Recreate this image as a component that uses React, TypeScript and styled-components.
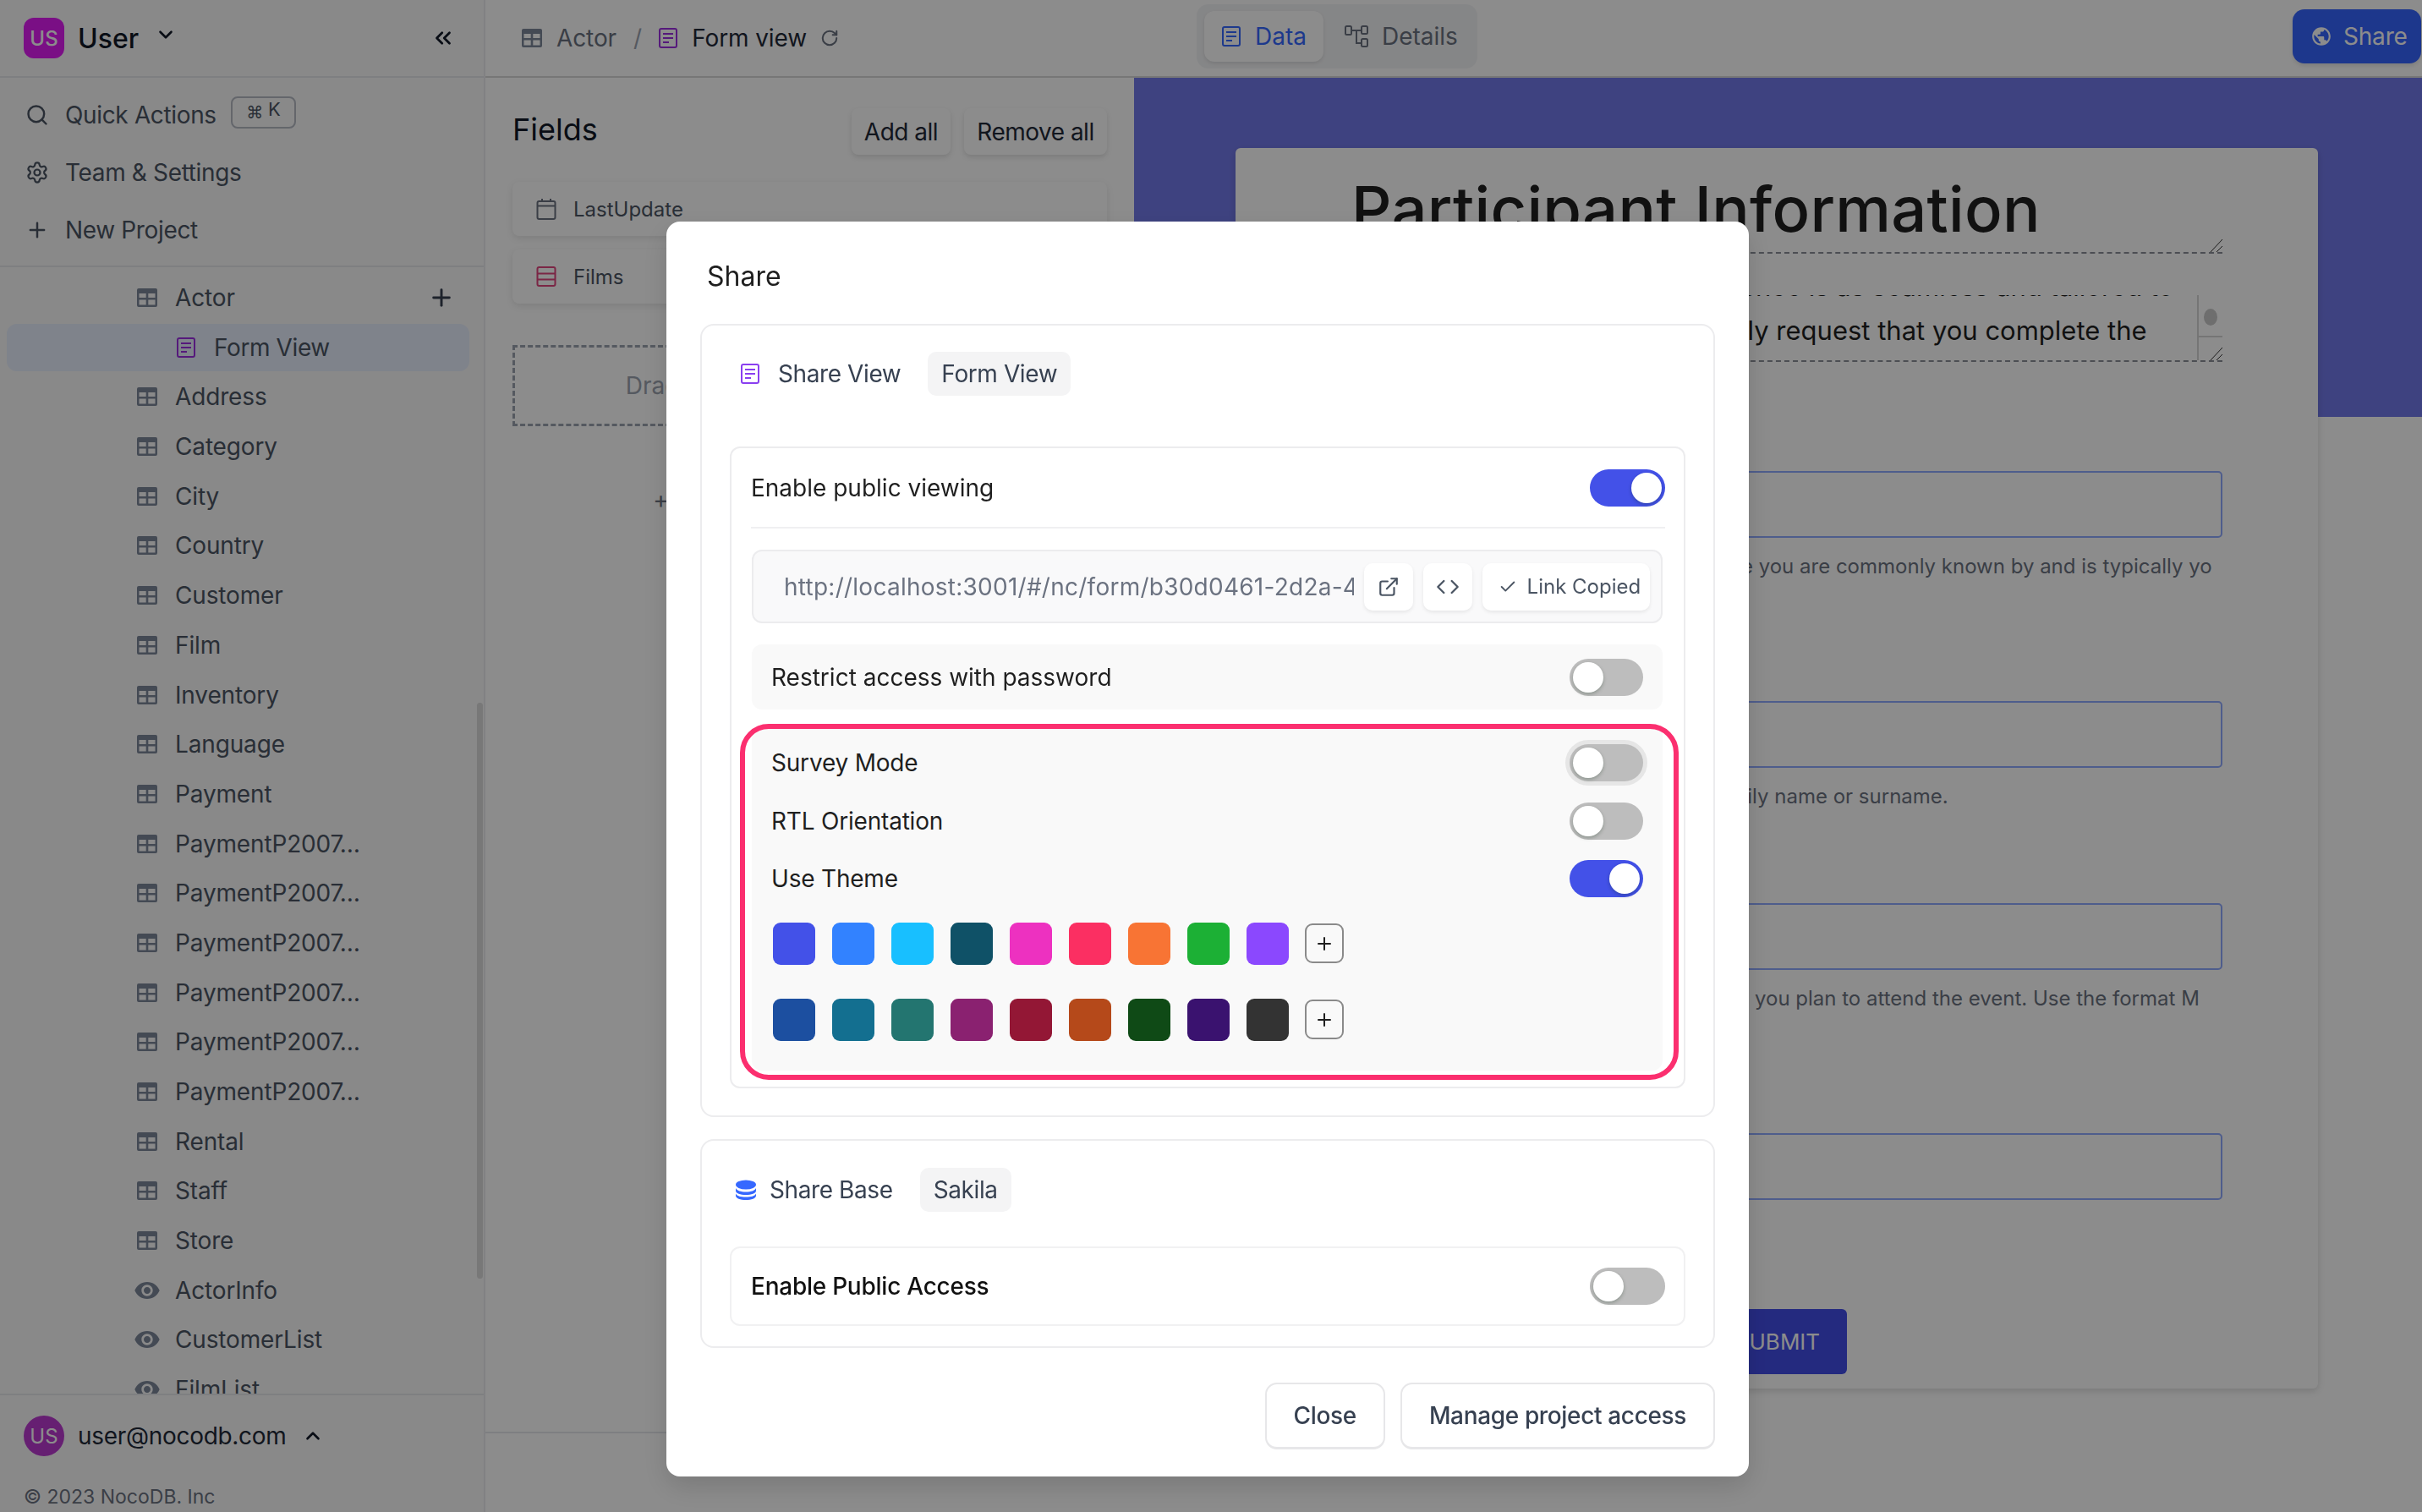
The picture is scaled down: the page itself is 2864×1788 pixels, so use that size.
import styled, {createGlobalStyle} from 'styled-components';
import {Check, ChevronDown, ChevronUp, ChevronsLeft, Code, ExternalLink, Plus, RotateCw, Search, Settings} from 'lucide-react';
import {MdPublic, MdVisibility} from 'react-icons/md';

const GlobalStyle = createGlobalStyle`
  html, body {
    margin: 0;
    padding: 0;
    height: 100%;
    background: #fff;
    overflow: hidden;
  }

  * {
    box-sizing: border-box;
  }

  body {
    font-family: Inter, "Noto Sans", "Liberation Sans", sans-serif;
    font-size: 28px;
    color: #1f2937;
  }
`;

const Page = styled.div`
  display: flex;
  width: 2864px;
  height: 1788px;
  overflow: hidden;
`;

/* ---------- sidebar ---------- */

const Sidebar = styled.aside`
  width: 574px;
  flex: none;
  height: 100%;
  display: flex;
  flex-direction: column;
  background: #f9f9fa;
  border-right: 2px solid #ececee;
`;

const SidebarHeader = styled.div`
  height: 92px;
  flex: none;
  display: flex;
  align-items: center;
  padding: 0 33px 0 28px;
  border-bottom: 2px solid #e5e7eb;
`;

const ProjectBadge = styled.div`
  width: 48px;
  height: 48px;
  border-radius: 12px;
  background: #de1cf2;
  color: #fff;
  display: flex;
  align-items: center;
  justify-content: center;
  font-size: 24px;
  font-weight: 500;
`;

const ProjectName = styled.span`
  margin-left: 16px;
  font-size: 32px;
  font-weight: 500;
  color: #111827;
`;

const ProjectCaret = styled.span`
  display: flex;
  margin-left: 19px;
  margin-top: -8px;
  color: #111827;
`;

const Collapse = styled.span`
  display: flex;
  margin-left: auto;
  color: #111827;
`;

const Menu = styled.div`
  flex: none;
  height: 224px;
  padding: 10px 0;
  border-bottom: 2px solid #e5e7eb;
`;

const MenuRow = styled.div`
  height: 68px;
  display: flex;
  align-items: center;
  gap: 19px;
  padding-left: 30px;
  color: #4b5563;
  font-size: 28px;
  letter-spacing: -0.35px;
`;

const Kbd = styled.span`
  width: 77px;
  height: 38px;
  margin-left: -2px;
  margin-top: -6px;
  border: 2px solid #b6bbc4;
  border-radius: 8px;
  display: flex;
  align-items: center;
  justify-content: center;
  gap: 6px;
  font-size: 20px;
  font-family: "DejaVu Sans", sans-serif;
  color: #4b5563;
`;

const KbdKey = styled.span`
  font-family: Inter, sans-serif;
  font-size: 22px;
  margin-top: -8px;
`;

const Tree = styled.div`
  position: relative;
  flex: 1;
  min-height: 0;
  overflow: hidden;
  padding-top: 8px;
  display: flex;
  flex-direction: column;
  gap: 2.7px;
`;

const TreeRow = styled.div<{$active?: boolean; $nested?: boolean}>`
  height: 56px;
  flex: none;
  margin: 0 17px 0 8px;
  padding: 0 17px 0 ${(p) => (p.$nested ? '200px' : '154px')};
  display: flex;
  align-items: center;
  gap: 21px;
  border-radius: 12px;
  background: ${(p) => (p.$active ? '#e7effe' : 'transparent')};
  color: #4b5563;
  font-size: 28px;
  letter-spacing: ${(p) => (p.$active ? '-0.4px' : '-0.15px')};
`;

const TreeLabel = styled.span`
  max-width: 222px;
  overflow: hidden;
  white-space: nowrap;
  text-overflow: ellipsis;
`;

const TreeAdd = styled.span`
  display: flex;
  margin-left: auto;
  color: #374151;
`;

const Scrollbar = styled.div`
  position: absolute;
  top: 515px;
  right: 1px;
  width: 7px;
  height: 681px;
  border-radius: 4px;
  background: #dadada;
`;

const SidebarFooter = styled.div`
  flex: none;
  height: 140px;
  padding: 24px 28px 0;
  border-top: 2px solid #e5e7eb;
`;

const UserRow = styled.div`
  display: flex;
  align-items: center;
  height: 48px;
`;

const Avatar = styled.div`
  width: 48px;
  height: 48px;
  border-radius: 50%;
  background: #bb3ad0;
  color: #fff;
  display: flex;
  align-items: center;
  justify-content: center;
  font-size: 24px;
`;

const UserMail = styled.span`
  margin-left: 16px;
  font-size: 28px;
  color: #1f2937;
  letter-spacing: -0.3px;
`;

const UserCaret = styled.span`
  display: flex;
  margin-left: 18px;
  color: #111827;
`;

const Copyright = styled.div`
  margin-top: 32px;
  font-size: 23px;
  line-height: 32px;
  color: #6b7280;
`;

/* ---------- main ---------- */

const Main = styled.div`
  flex: 1;
  min-width: 0;
  display: flex;
  flex-direction: column;
`;

const TopBar = styled.header`
  height: 92px;
  flex: none;
  display: flex;
  align-items: center;
  padding-left: 43px;
  border-bottom: 2px solid #d9d9d9;
`;

const Crumbs = styled.div`
  width: 798px;
  display: flex;
  align-items: center;
  font-size: 28px;
  color: #6b7280;
`;

const CrumbText = styled.span<{$strong?: boolean}>`
  margin-left: ${(p) => (p.$strong ? '16px' : '17px')};
  color: ${(p) => (p.$strong ? '#1f2937' : '#6b7280')};
  letter-spacing: -0.1px;
`;

const CrumbSlash = styled.span`
  margin: 0 19px 0 20px;
  color: #9ca3af;
`;

const Refresh = styled.span`
  display: flex;
  margin-left: 16px;
  color: #6b7280;
`;

const TabGroup = styled.div`
  width: 332px;
  height: 76px;
  margin-top: -4px;
  padding: 8px 9px;
  display: flex;
  gap: 25px;
  border-radius: 14px;
  background: #f3f4f6;
`;

const Tab = styled.div<{$active?: boolean}>`
  height: 60px;
  padding: 0 ${(p) => (p.$active ? '20px' : '0')};
  display: flex;
  align-items: center;
  gap: 16px;
  border-radius: 12px;
  font-size: 28px;
  background: ${(p) => (p.$active ? '#fff' : 'transparent')};
  color: ${(p) => (p.$active ? '#3668ff' : '#6b7280')};
  box-shadow: ${(p) => (p.$active ? '0 2px 4px rgba(0,0,0,.1)' : 'none')};
`;

const ShareButton = styled.button`
  margin-left: auto;
  margin-right: 1px;
  margin-top: -4px;
  width: 152px;
  height: 64px;
  padding: 0 0 0 21px;
  border: 0;
  border-radius: 14px;
  display: flex;
  align-items: center;
  gap: 13px;
  background: #3665ff;
  color: #fff;
  font: inherit;
  font-size: 28px;
  letter-spacing: -0.2px;
  box-shadow: 0 3px 4px rgba(0,0,0,.1);
`;

const Content = styled.div`
  flex: 1;
  min-height: 0;
  display: flex;
`;

const FieldsPanel = styled.section`
  width: 767px;
  height: 1603px;
  flex: none;
  padding: 36px 32px 0 32px;
  border-bottom: 2px solid #e5e7eb;
`;

const FieldsHead = styled.div`
  display: flex;
  align-items: center;
  gap: 16px;
  margin-bottom: 32px;
`;

const FieldsTitle = styled.h2`
  margin: 0 auto 5px 0;
  font-size: 36px;
  font-weight: 400;
  color: #111827;
`;

const GhostButton = styled.button<{$width: number}>`
  width: ${(p) => p.$width}px;
  height: 55px;
  padding: 0;
  border: 0;
  border-radius: 8px;
  background: #fff;
  color: #1f2937;
  font: inherit;
  font-size: 28px;
  letter-spacing: -0.5px;
  box-shadow: 0 3px 6px rgba(0,0,0,.12);
`;

const FieldCard = styled.div`
  height: 64px;
  margin-bottom: 16px;
  padding-left: 28px;
  display: flex;
  align-items: center;
  gap: 20px;
  border-radius: 8px;
  background: #fff;
  font-size: 24px;
  color: #4b5563;
  box-shadow: 0 3px 8px rgba(0,0,0,.1);
`;

const DropZone = styled.div`
  height: 96px;
  margin-top: 49px;
  display: flex;
  align-items: center;
  justify-content: center;
  border: 3px dashed #9ca3af;
  font-size: 28px;
  color: #9ca3af;
`;

const AddField = styled.div`
  margin-top: 72px;
  text-align: center;
  font-size: 28px;
  color: #6b7280;
`;

const FormArea = styled.section`
  flex: 1;
  min-width: 0;
  padding: 83px 123px 0 120px;
  background: linear-gradient(#7279e9 0, #7279e9 401px, transparent 401px);
`;

const FormCard = styled.div`
  height: 1467px;
  padding: 0 113px 0 137px;
  display: flex;
  flex-direction: column;
  border-radius: 6px;
  background: #fff;
  box-shadow: 0 3px 8px rgba(0,0,0,.14);
`;

const FormTitle = styled.div`
  position: relative;
  height: 125px;
  padding-top: 27px;
  border-bottom: 2px dashed #8b8f98;
  font-size: 74px;
  line-height: 90px;
  font-weight: 500;
  letter-spacing: 0.3px;
  color: #1f1f1f;
`;

const FormDescription = styled.div`
  position: relative;
  height: 79px;
  margin-top: 49px;
  margin-bottom: 19px;
  padding-bottom: 9px;
  display: flex;
  flex-direction: column;
  justify-content: flex-end;
  overflow: hidden;
  border-bottom: 2px dashed #8b8f98;
  font-size: 31px;
  line-height: 52px;
  color: #1f1f1f;
  white-space: nowrap;
`;

const Grip = styled.svg`
  position: absolute;
  right: 0;
  bottom: 0;
  color: #333;
`;

const TextScroll = styled.div`
  position: absolute;
  top: 0;
  right: 0;
  bottom: 0;
  width: 30px;
  border-left: 2px solid #d5d5d5;
  background: #fff;
`;

const TextThumb = styled.div`
  width: 16px;
  height: 20px;
  margin: 16px 0 0 6px;
  border-radius: 50%;
  background: #c8c8c8;
`;

const TextRule = styled.div`
  height: 2px;
  margin-top: 12px;
  background: #d5d5d5;
`;

const FieldBlock = styled.div`
  margin-top: 64px;
`;

const FieldLabel = styled.label`
  display: block;
  height: 46px;
  font-size: 28px;
  font-weight: 500;
  color: #1f2937;
`;

const FieldInput = styled.div`
  height: 79px;
  border: 2px solid #8fa9ff;
  border-radius: 5px;
`;

const FieldHelp = styled.div`
  margin-top: 17px;
  font-size: 24px;
  line-height: 33px;
  color: #6b7280;
`;

const SubmitButton = styled.button`
  align-self: flex-start;
  width: 164px;
  height: 77px;
  margin-top: 129px;
  margin-left: 422px;
  border: 0;
  border-radius: 6px;
  background: #434de8;
  color: #fff;
  font: inherit;
  font-size: 26px;
`;

/* ---------- share dialog ---------- */

const Backdrop = styled.div`
  position: fixed;
  inset: 0;
  padding: 262px 0 0 788px;
  background: rgba(0, 0, 0, .45);
`;

const Dialog = styled.div`
  width: 1280px;
  height: 1484px;
  padding: 44px 40px 0;
  border-radius: 16px;
  background: #fff;
  box-shadow: 0 12px 32px rgba(0, 0, 0, .14);
`;

const DialogTitle = styled.h3`
  margin: 0 0 35px 8px;
  font-size: 32px;
  line-height: 42px;
  font-weight: 400;
  color: #1f1f1f;
`;

const Section = styled.div<{$compact?: boolean}>`
  margin-bottom: 26px;
  padding: ${(p) => (p.$compact ? '32px 33px 24px' : '31px 33px 32px')};
  border: 2px solid #ececee;
  border-radius: 16px;
`;

const SectionHead = styled.div<{$inset: number}>`
  height: 52px;
  padding-left: ${(p) => p.$inset}px;
  display: flex;
  align-items: center;
  gap: 32px;
  font-size: 28px;
  letter-spacing: -0.4px;
  color: #374151;
`;

const SectionName = styled.span<{$gap: number}>`
  display: flex;
  align-items: center;
  gap: ${(p) => p.$gap}px;
`;

const SectionChip = styled.span`
  height: 52px;
  padding: 0 16px;
  display: flex;
  align-items: center;
  border-radius: 10px;
  background: #f4f4f5;
  color: #374151;
`;

const InnerCard = styled.div`
  margin-top: 60px;
  padding: 0 25px 19px 24px;
  border: 2px solid #ececee;
  border-radius: 12px;
`;

const PublicRow = styled.div`
  height: 95px;
  margin: 0 -3px 0 -1px;
  display: flex;
  align-items: center;
  justify-content: space-between;
  border-bottom: 2px solid #f0f0f1;
  color: #1f1f1f;
`;

const UrlBox = styled.div`
  height: 87px;
  margin-top: 25px;
  padding: 0 13px 0 36px;
  display: flex;
  align-items: center;
  gap: 12px;
  border: 2px solid #ececee;
  border-radius: 12px;
  background: #f9f9fa;
`;

const UrlText = styled.div`
  width: 677px;
  overflow: hidden;
  white-space: nowrap;
  font-size: 28px;
  letter-spacing: .25px;
  color: #6b7280;
`;

const UrlAction = styled.button<{$wide?: boolean}>`
  width: ${(p) => (p.$wide ? '199px' : '58px')};
  height: 56px;
  padding: 0 0 0 ${(p) => (p.$wide ? '8px' : '0')};
  border: 0;
  border-radius: 10px;
  display: flex;
  align-items: center;
  justify-content: center;
  gap: 12px;
  background: #fff;
  color: #4b5563;
  font: inherit;
  font-size: 24px;
  box-shadow: 0 2px 4px rgba(0, 0, 0, .08);
`;

const RestrictRow = styled.div`
  height: 77px;
  margin-top: 25px;
  padding: 0 23px;
  display: flex;
  align-items: center;
  justify-content: space-between;
  border-radius: 12px;
  background: #f9f9f9;
  color: #1f1f1f;
`;

const ThemeBlock = styled.div`
  position: relative;
  height: 408px;
  margin-top: 19px;
  padding-top: 10px;
  border-radius: 12px;
  background: #f9f9f9;
  color: #1f1f1f;
  letter-spacing: -0.2px;
`;

const Highlight = styled.div`
  position: absolute;
  top: -2px;
  left: -14px;
  right: -19px;
  bottom: -11px;
  border: 6px solid #fb2f6f;
  border-radius: 34px;
  pointer-events: none;
`;

const OptionRow = styled.div`
  height: 68.5px;
  padding: 0 23px;
  display: flex;
  align-items: center;
  justify-content: space-between;
`;

const SwatchGrid = styled.div`
  margin-top: 17px;
  padding-left: 25px;
  display: flex;
  flex-direction: column;
  gap: 40px;
`;

const SwatchRow = styled.div`
  height: 50px;
  display: flex;
  align-items: center;
  gap: 20px;
`;

const Swatch = styled.div<{$color: string}>`
  width: 50px;
  height: 50px;
  border-radius: 9px;
  background: ${(p) => p.$color};
`;

const SwatchAdd = styled.div`
  width: 46px;
  height: 47px;
  margin-left: -1px;
  display: flex;
  align-items: center;
  justify-content: center;
  border: 2px solid #8a8a8a;
  border-radius: 9px;
  color: #1f1f1f;
`;

const Switch = styled.div<{$on?: boolean; $focus?: boolean; $large?: boolean}>`
  width: ${(p) => (p.$large ? '89px' : '87px')};
  height: 44px;
  flex: none;
  padding: 4px;
  display: flex;
  justify-content: ${(p) => (p.$on ? 'flex-end' : 'flex-start')};
  border-radius: 22px;
  background: ${(p) => (p.$on ? '#4351e8' : '#bdbdbd')};
  box-shadow: ${(p) => (p.$focus ? '0 0 0 5px #e6e6e6' : 'none')};
`;

const SwitchThumb = styled.span`
  width: 36px;
  height: 36px;
  border-radius: 50%;
  background: #fff;
  box-shadow: 0 2px 4px rgba(0, 35, 11, .25);
`;

const PublicAccessRow = styled.div`
  height: 94px;
  margin-top: 41px;
  padding: 0 22px 0 23px;
  display: flex;
  align-items: center;
  justify-content: space-between;
  border: 2px solid #f1f1f2;
  border-radius: 12px;
  font-weight: 500;
  letter-spacing: -0.25px;
  color: #111;
`;

const DialogActions = styled.div`
  margin-top: 41px;
  display: flex;
  justify-content: flex-end;
  gap: 18px;
`;

const ActionButton = styled.button`
  height: 79px;
  padding: 0 32px;
  border: 2px solid #e7e7e9;
  border-bottom-width: 3px;
  border-radius: 14px;
  background: #fff;
  color: #374151;
  font: inherit;
  font-size: 28px;
  font-weight: 500;
  letter-spacing: -0.35px;
`;

/* ---------- drawn icons ---------- */

const TableIcon = () => (
    <svg width="24" height="22" viewBox="0 0 24 22" fill="#7c8799" style={{flex: 'none'}}>
        <path fillRule="evenodd" d="M2 0h20a2 2 0 0 1 2 2v18a2 2 0 0 1-2 2H2a2 2 0 0 1-2-2V2a2 2 0 0 1 2-2zM2.5 6v5h8.2V6zM13.300 6v5h8.200V6zM2.500 13.500v6h8.200v-6zM13.300 13.500v6h8.200v-6z"/>
    </svg>
);

const FormIcon = ({color}: {color: string}) => (
    <svg width="24" height="24" viewBox="0 0 24 24" fill="none" stroke={color} strokeWidth="2" style={{flex: 'none'}}>
        <rect x="2" y="1" width="20" height="22" rx="2"/>
        <path d="M6 7h12M6 12h12M6 17h7"/>
    </svg>
);

const CalendarIcon = () => (
    <svg width="24" height="26" viewBox="0 0 24 26" fill="none" stroke="#6b7280" strokeWidth="2" style={{flex: 'none'}}>
        <rect x="1.500" y="4" width="21" height="21" rx="2"/>
        <path d="M1.500 9.500h21M7 1v4M17 1v4M7 14h.01M12 14h.01M17 14h.01"/>
    </svg>
);

const RowsIcon = () => (
    <svg width="24" height="24" viewBox="0 0 24 24" fill="none" stroke="#e0457e" strokeWidth="2" style={{flex: 'none'}}>
        <rect x="1.500" y="1" width="21" height="22" rx="2"/>
        <path d="M1.500 8.500h21M1.500 15.500h21"/>
    </svg>
);

const DetailsIcon = () => (
    <svg width="28" height="26" viewBox="0 0 28 26" fill="none" stroke="#6b7280" strokeWidth="2" style={{flex: 'none'}}>
        <rect x="1" y="1" width="7" height="10" rx="1.500"/>
        <rect x="20" y="1" width="7" height="9" rx="1.500"/>
        <rect x="20" y="16" width="7" height="9" rx="1.500"/>
        <path d="M8 6h12M14 6v15h6"/>
    </svg>
);

const BaseIcon = () => (
    <svg width="24" height="24" viewBox="0 0 24 24" fill="#3668ff" style={{flex: 'none'}}>
        <ellipse cx="12" cy="6" rx="12" ry="5.500"/>
        <path d="M0 10c1.500 3 6 4.500 12 4.500S22.500 13 24 10v3c0 3.500-5.500 5-12 5S0 16.500 0 13z"/>
        <path d="M0 16.500c1.500 3 6 4 12 4s10.500-1 12-4V19c0 3-5.500 5-12 5S0 22 0 19z"/>
    </svg>
);

const ResizeGrip = () => (
    <Grip width="15" height="15" viewBox="0 0 15 15" fill="none" stroke="currentColor" strokeWidth="1">
        <path d="M15 0L1 15M15 8L8 15"/>
    </Grip>
);

const tables = [
    'Address', 'Category', 'City', 'Country', 'Customer', 'Film', 'Inventory', 'Language', 'Payment',
    'PaymentP2007_01', 'PaymentP2007_02', 'PaymentP2007_03', 'PaymentP2007_04', 'PaymentP2007_05', 'PaymentP2007_06',
    'Rental', 'Staff', 'Store'
];
const views = ['ActorInfo', 'CustomerList', 'FilmList'];
const themeRowOne = ['#4351e8', '#3282ff', '#18bfff', '#0f5167', '#ed31c0', '#fb2f62', '#f87434', '#1cb035', '#8b48fe'];
const themeRowTwo = ['#1c4fa0', '#136f90', '#237570', '#8a2170', '#931735', '#b5491a', '#0f4a16', '#3a126f', '#333333'];

const App = () => {
    return (
        <Page>
            <GlobalStyle/>
            <Sidebar>
                <SidebarHeader>
                    <ProjectBadge>US</ProjectBadge>
                    <ProjectName>User</ProjectName>
                    <ProjectCaret><ChevronDown size={26} strokeWidth={2.4}/></ProjectCaret>
                    <Collapse><ChevronsLeft size={30} strokeWidth={2.2}/></Collapse>
                </SidebarHeader>
                <Menu>
                    <MenuRow>
                        <Search size={28} strokeWidth={2.1}/>
                        Quick Actions
                        <Kbd>⌘<KbdKey>K</KbdKey></Kbd>
                    </MenuRow>
                    <MenuRow>
                        <Settings size={28} strokeWidth={1.9}/>
                        Team &amp; Settings
                    </MenuRow>
                    <MenuRow>
                        <Plus size={28} strokeWidth={2.1}/>
                        New Project
                    </MenuRow>
                </Menu>
                <Tree>
                    <TreeRow>
                        <TableIcon/>
                        <TreeLabel>Actor</TreeLabel>
                        <TreeAdd><Plus size={32} strokeWidth={2.2}/></TreeAdd>
                    </TreeRow>
                    <TreeRow $active $nested>
                        <FormIcon color="#9c2fe0"/>
                        <TreeLabel>Form View</TreeLabel>
                    </TreeRow>
                    {tables.map((t) => (
                        <TreeRow key={t}>
                            <TableIcon/>
                            <TreeLabel>{t}</TreeLabel>
                        </TreeRow>
                    ))}
                    {views.map((v) => (
                        <TreeRow key={v}>
                            <MdVisibility size={32} color="#7c8799" style={{margin: '0 -4px', flex: 'none'}}/>
                            <TreeLabel>{v}</TreeLabel>
                        </TreeRow>
                    ))}
                    <Scrollbar/>
                </Tree>
                <SidebarFooter>
                    <UserRow>
                        <Avatar>US</Avatar>
                        <UserMail>user@nocodb.com</UserMail>
                        <UserCaret><ChevronUp size={26} strokeWidth={2.4}/></UserCaret>
                    </UserRow>
                    <Copyright>© 2023 NocoDB. Inc</Copyright>
                </SidebarFooter>
            </Sidebar>

            <Main>
                <TopBar>
                    <Crumbs>
                        <TableIcon/>
                        <CrumbText>Actor</CrumbText>
                        <CrumbSlash>/</CrumbSlash>
                        <FormIcon color="#9c2fe0"/>
                        <CrumbText $strong>Form view</CrumbText>
                        <Refresh><RotateCw size={22} strokeWidth={2.2}/></Refresh>
                    </Crumbs>
                    <TabGroup>
                        <Tab $active><FormIcon color="#3668ff"/>Data</Tab>
                        <Tab><DetailsIcon/>Details</Tab>
                    </TabGroup>
                    <ShareButton>
                        <MdPublic size={26}/>
                        Share
                    </ShareButton>
                </TopBar>
                <Content>
                    <FieldsPanel>
                        <FieldsHead>
                            <FieldsTitle>Fields</FieldsTitle>
                            <GhostButton $width={117}>Add all</GhostButton>
                            <GhostButton $width={169}>Remove all</GhostButton>
                        </FieldsHead>
                        <FieldCard><CalendarIcon/>LastUpdate</FieldCard>
                        <FieldCard><RowsIcon/>Films</FieldCard>
                        <DropZone>Drag and drop fields here to hide</DropZone>
                        <AddField>+ Add new field to this table</AddField>
                    </FieldsPanel>
                    <FormArea>
                        <FormCard>
                            <FormTitle>
                                Participant Information
                                <ResizeGrip/>
                            </FormTitle>
                            <FormDescription>
                                <div>To make sure your event experience is as seamless and tailored to</div>
                                <div>your needs as possible, we kindly request that you complete the</div>
                                <TextScroll>
                                    <TextThumb/>
                                    <TextRule/>
                                </TextScroll>
                                <ResizeGrip/>
                            </FormDescription>
                            <FieldBlock>
                                <FieldLabel>First Name</FieldLabel>
                                <FieldInput/>
                                <FieldHelp>Your first name or a forename is the name you are commonly known by and is typically yo<br/>ur given name.</FieldHelp>
                            </FieldBlock>
                            <FieldBlock>
                                <FieldLabel>Last Name</FieldLabel>
                                <FieldInput/>
                                <FieldHelp>Your last name is also known as your family name or surname.</FieldHelp>
                            </FieldBlock>
                            <FieldBlock>
                                <FieldLabel>Attendance Date</FieldLabel>
                                <FieldInput/>
                                <FieldHelp>Please select the specified date on which you plan to attend the event. Use the format M<br/>M/DD/YYYY.</FieldHelp>
                            </FieldBlock>
                            <FieldBlock>
                                <FieldLabel>Email</FieldLabel>
                                <FieldInput/>
                            </FieldBlock>
                            <SubmitButton>SUBMIT</SubmitButton>
                        </FormCard>
                    </FormArea>
                </Content>
            </Main>

            <Backdrop>
                <Dialog>
                    <DialogTitle>Share</DialogTitle>
                    <Section>
                        <SectionHead $inset={12}>
                            <SectionName $gap={21}>
                                <FormIcon color="#8a3ff0"/>
                                Share View
                            </SectionName>
                            <SectionChip>Form View</SectionChip>
                        </SectionHead>
                        <InnerCard>
                            <PublicRow>
                                Enable public viewing
                                <Switch $on $large><SwitchThumb/></Switch>
                            </PublicRow>
                            <UrlBox>
                                <UrlText>http://localhost:3001/#/nc/form/b30d0461-2d2a-4d1f-9c3e-7a1b5e</UrlText>
                                <UrlAction><ExternalLink size={26}/></UrlAction>
                                <UrlAction><Code size={28}/></UrlAction>
                                <UrlAction $wide><Check size={22}/>Link Copied</UrlAction>
                            </UrlBox>
                            <RestrictRow>
                                Restrict access with password
                                <Switch><SwitchThumb/></Switch>
                            </RestrictRow>
                            <ThemeBlock>
                                <OptionRow>
                                    Survey Mode
                                    <Switch $focus><SwitchThumb/></Switch>
                                </OptionRow>
                                <OptionRow>
                                    RTL Orientation
                                    <Switch><SwitchThumb/></Switch>
                                </OptionRow>
                                <OptionRow>
                                    Use Theme
                                    <Switch $on><SwitchThumb/></Switch>
                                </OptionRow>
                                <SwatchGrid>
                                    <SwatchRow>
                                        {themeRowOne.map((c) => <Swatch key={c} $color={c}/>)}
                                        <SwatchAdd><Plus size={24} strokeWidth={2}/></SwatchAdd>
                                    </SwatchRow>
                                    <SwatchRow>
                                        {themeRowTwo.map((c) => <Swatch key={c} $color={c}/>)}
                                        <SwatchAdd><Plus size={24} strokeWidth={2}/></SwatchAdd>
                                    </SwatchRow>
                                </SwatchGrid>
                                <Highlight/>
                            </ThemeBlock>
                        </InnerCard>
                    </Section>
                    <Section $compact>
                        <SectionHead $inset={7}>
                            <SectionName $gap={16}>
                                <BaseIcon/>
                                Share Base
                            </SectionName>
                            <SectionChip>Sakila</SectionChip>
                        </SectionHead>
                        <PublicAccessRow>
                            Enable Public Access
                            <Switch $large><SwitchThumb/></Switch>
                        </PublicAccessRow>
                    </Section>
                    <DialogActions>
                        <ActionButton>Close</ActionButton>
                        <ActionButton>Manage project access</ActionButton>
                    </DialogActions>
                </Dialog>
            </Backdrop>
        </Page>
    );
};

export default App;
